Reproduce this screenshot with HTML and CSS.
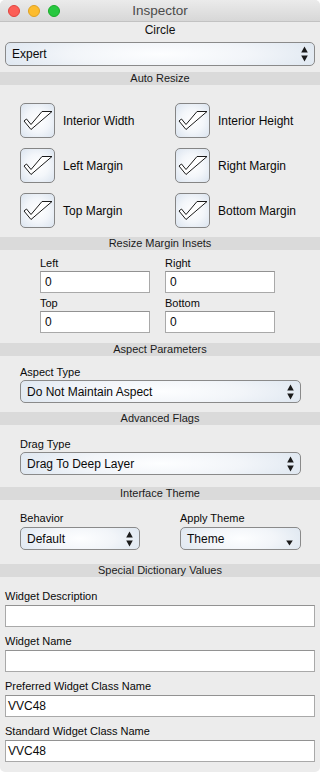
FILE: index.html
```html
<!DOCTYPE html>
<html>
<head>
<meta charset="utf-8">
<link rel="stylesheet" href="styles.css">
</head>
<body>
<div class="window">
  <div class="titlebar">
    <div class="lights">
      <span class="light red"></span>
      <span class="light yellow"></span>
      <span class="light green"></span>
    </div>
    <div class="title">Inspector</div>
    <div></div>
  </div>

  <div class="objname">Circle</div>
  <div class="popup main-popup">
    <span>Expert</span>
    <svg class="updown" width="7" height="16" viewBox="0 0 7 16"><path d="M3.5 0.5 L6.8 6.5 H0.2 Z M0.2 9.5 H6.8 L3.5 15.5 Z"/></svg>
  </div>

  <div class="header">Auto Resize</div>
  <div class="checks">
    <div class="check"><span class="box"><svg width="35" height="35" viewBox="0 0 35 35"><polygon points="32,8.5 11,26.5 4,18 6.5,16 11,21.5 22,8.5"/></svg></span><span>Interior Width</span></div>
    <div class="check"><span class="box"><svg width="35" height="35" viewBox="0 0 35 35"><polygon points="32,8.5 11,26.5 4,18 6.5,16 11,21.5 22,8.5"/></svg></span><span>Interior Height</span></div>
    <div class="check"><span class="box"><svg width="35" height="35" viewBox="0 0 35 35"><polygon points="32,8.5 11,26.5 4,18 6.5,16 11,21.5 22,8.5"/></svg></span><span>Left Margin</span></div>
    <div class="check"><span class="box"><svg width="35" height="35" viewBox="0 0 35 35"><polygon points="32,8.5 11,26.5 4,18 6.5,16 11,21.5 22,8.5"/></svg></span><span>Right Margin</span></div>
    <div class="check"><span class="box"><svg width="35" height="35" viewBox="0 0 35 35"><polygon points="32,8.5 11,26.5 4,18 6.5,16 11,21.5 22,8.5"/></svg></span><span>Top Margin</span></div>
    <div class="check"><span class="box"><svg width="35" height="35" viewBox="0 0 35 35"><polygon points="32,8.5 11,26.5 4,18 6.5,16 11,21.5 22,8.5"/></svg></span><span>Bottom Margin</span></div>
  </div>

  <div class="header">Resize Margin Insets</div>
  <div class="insets">
    <div class="cell"><div class="label">Left</div><div class="field inset-field">0</div></div>
    <div class="cell"><div class="label">Right</div><div class="field inset-field">0</div></div>
    <div class="cell"><div class="label">Top</div><div class="field inset-field">0</div></div>
    <div class="cell"><div class="label">Bottom</div><div class="field inset-field">0</div></div>
  </div>

  <div class="header">Aspect Parameters</div>
  <div class="section aspect">
    <div class="label">Aspect Type</div>
    <div class="popup">
      <span>Do Not Maintain Aspect</span>
      <svg class="updown" width="7" height="16" viewBox="0 0 7 16"><path d="M3.5 0.5 L6.8 6.5 H0.2 Z M0.2 9.5 H6.8 L3.5 15.5 Z"/></svg>
    </div>
  </div>

  <div class="header">Advanced Flags</div>
  <div class="section drag">
    <div class="label">Drag Type</div>
    <div class="popup">
      <span>Drag To Deep Layer</span>
      <svg class="updown" width="7" height="16" viewBox="0 0 7 16"><path d="M3.5 0.5 L6.8 6.5 H0.2 Z M0.2 9.5 H6.8 L3.5 15.5 Z"/></svg>
    </div>
  </div>

  <div class="header">Interface Theme</div>
  <div class="theme">
    <div class="cell">
      <div class="label">Behavior</div>
      <div class="popup">
        <span>Default</span>
        <svg class="updown" width="7" height="16" viewBox="0 0 7 16"><path d="M3.5 0.5 L6.8 6.5 H0.2 Z M0.2 9.5 H6.8 L3.5 15.5 Z"/></svg>
      </div>
    </div>
    <div class="cell">
      <div class="label">Apply Theme</div>
      <div class="popup pulldown">
        <span>Theme</span>
        <svg class="down" width="7" height="6" viewBox="0 0 7 6"><path d="M0.2 0.5 H6.8 L3.5 5.5 Z"/></svg>
      </div>
    </div>
  </div>

  <div class="header dict-header">Special Dictionary Values</div>
  <div class="dict">
    <div class="label">Widget Description</div>
    <div class="field dict-field"></div>
    <div class="label">Widget Name</div>
    <div class="field dict-field"></div>
    <div class="label">Preferred Widget Class Name</div>
    <div class="field dict-field">VVC48</div>
    <div class="label">Standard Widget Class Name</div>
    <div class="field dict-field">VVC48</div>
  </div>
</div>
</body>
</html>
```

FILE: styles.css
```css
html, body {
  margin: 0;
  padding: 0;
  background: #ffffff;
}

body {
  font-family: "Liberation Sans", Arial, Helvetica, sans-serif;
  color: #111;
}

.window {
  width: 320px;
  height: 772px;
  background: #ececec;
  border-radius: 5px;
  overflow: hidden;
}

.titlebar {
  height: 21px;
  border-bottom: 1px solid #c2c2c2;
  background: linear-gradient(#ebebeb, #d7d7d7);
  display: grid;
  grid-template-columns: 1fr auto 1fr;
  align-items: center;
  border-radius: 5px 5px 0 0;
}

.lights {
  display: flex;
  gap: 8px;
  padding-left: 8px;
  padding-top: 1px;
}

.light {
  width: 12px;
  height: 12px;
  border-radius: 50%;
  box-sizing: border-box;
}

.red { background: #fc5f57; border: 0.5px solid #e0443e; }
.yellow { background: #fdbc2e; border: 0.5px solid #dea123; }
.green { background: #28c840; border: 0.5px solid #1aab29; }

.title {
  font-size: 13.5px;
  color: #4b4b4b;
  line-height: 21px;
}

.objname {
  text-align: center;
  font-size: 12px;
  line-height: 15px;
  padding-top: 1px;
  color: #111;
}

.popup {
  box-sizing: border-box;
  height: 23px;
  border: 1px solid #8a8a8a;
  border-radius: 5px;
  background: radial-gradient(ellipse 65% 130% at 50% 50%, #fdfeff 0%, #f2f5f9 45%, #d9e3ee 100%);
  display: flex;
  align-items: center;
  justify-content: space-between;
  padding: 0 6px 0 6px;
  font-size: 12px;
  color: #0a0a0a;
}

.main-popup {
  height: 24px;
  margin: 4px 5px 6px 5px;
}

.updown path, .down path {
  fill: #1a1a1a;
}

.pulldown {
  align-items: center;
  padding-right: 7px;
}

.pulldown .down {
  align-self: flex-end;
  margin-bottom: 3px;
}

.header {
  height: 13px;
  line-height: 13px;
  background: #dadada;
  text-align: center;
  font-size: 11px;
  color: #1a1a1a;
}

.checks {
  display: grid;
  grid-template-columns: 155px 1fr;
  row-gap: 10px;
  padding: 18px 0 9px 20px;
}

.check {
  display: flex;
  align-items: center;
  gap: 8px;
  font-size: 12px;
  color: #0a0a0a;
}

.box {
  width: 35px;
  height: 35px;
  box-sizing: border-box;
  border: 1px solid #858585;
  border-radius: 5px;
  background: radial-gradient(ellipse 70% 70% at 50% 50%, #ffffff 0%, #f3f6fa 50%, #dbe4ef 100%);
  display: block;
  overflow: hidden;
}

.box svg {
  display: block;
  margin: -1px 0 0 -1px;
}

.box polygon {
  fill: #ffffff;
  stroke: #1a1a1a;
  stroke-width: 1;
  stroke-linejoin: miter;
}

.label {
  font-size: 11px;
  line-height: 14px;
  color: #0a0a0a;
}

.field {
  box-sizing: border-box;
  height: 22px;
  background: #ffffff;
  border: 1px solid #a9a9a9;
  border-top-color: #929292;
  font-size: 12px;
  line-height: 20px;
  color: #0a0a0a;
}

.insets {
  display: grid;
  grid-template-columns: 110px 110px;
  column-gap: 15px;
  row-gap: 3px;
  padding: 6px 0 10px 40px;
}

.insets .label {
  margin-bottom: 1px;
}

.inset-field {
  padding-left: 4px;
}

.section {
  padding: 0 19px 0 20px;
}

.section .label {
  margin-bottom: 1px;
}

.aspect {
  padding-top: 9px;
  padding-bottom: 9px;
}

.drag {
  padding-top: 12px;
  padding-bottom: 12px;
}

.theme {
  display: grid;
  grid-template-columns: 120px 121px;
  column-gap: 40px;
  padding: 11px 0 14px 20px;
}

.theme .label {
  margin-bottom: 2px;
}

.dict {
  padding: 12px 5px 0 5px;
  display: flex;
  flex-direction: column;
}

.dict .label {
  margin-bottom: 2px;
}

.dict-field {
  padding-left: 2px;
  margin-bottom: 7px;
}
```
